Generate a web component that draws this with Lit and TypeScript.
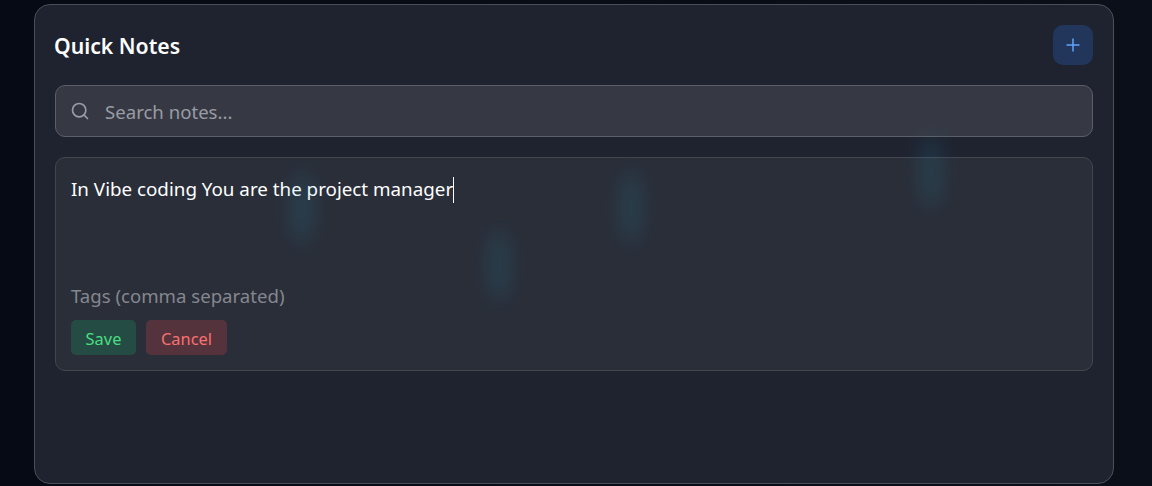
import { LitElement, css, html } from 'lit';
import { customElement, state } from 'lit/decorators.js';

const GLOWS = [
  { x: 302, y: 208, w: 24, h: 72 },
  { x: 499, y: 265, w: 22, h: 72 },
  { x: 631, y: 207, w: 22, h: 74 },
  { x: 931, y: 172, w: 22, h: 74 },
];

@customElement('app-root')
export class AppRoot extends LitElement {
  @state()
  private _note = 'In Vibe coding You are the project manager';

  render() {
    return html`
      <div class="page">
        ${GLOWS.map(
          (g) => html`<div
            class="glow"
            style="left:${g.x - g.w / 2}px;top:${g.y - g.h / 2}px;width:${g.w}px;height:${g.h}px"
          ></div>`
        )}
        <section class="card">
          <header class="head">
            <h2>Quick Notes</h2>
            <button class="add" aria-label="Add note">
              <svg width="16" height="16" viewBox="0 0 16 16" fill="none" stroke="currentColor" stroke-width="1.5">
                <path d="M8 1.5v13M1.5 8h13" />
              </svg>
            </button>
          </header>
          <div class="search">
            <svg width="20" height="20" viewBox="0 0 24 24" fill="none" stroke="currentColor" stroke-width="2" stroke-linecap="round" stroke-linejoin="round">
              <circle cx="11" cy="11" r="8" />
              <path d="m21 21-4.3-4.3" />
            </svg>
            <span>Search notes...</span>
          </div>
          <div class="editor">
            <div class="body"><span>${this._note}</span><i class="caret"></i></div>
            <div class="tags">Tags (comma separated)</div>
            <div class="actions">
              <button class="save">Save</button>
              <button class="cancel">Cancel</button>
            </div>
          </div>
        </section>
      </div>
    `;
  }

  static styles = css`
    :host {
      display: block;
      font-family: 'Noto Sans', sans-serif;
    }

    .page {
      position: relative;
      height: 486px;
      box-sizing: border-box;
      padding: 4px 38px 2px 34px;
      background: linear-gradient(90deg, #060a14 0%, #0a0f1a 100%);
      overflow: hidden;
    }

    .card {
      box-sizing: border-box;
      height: 480px;
      padding: 20px;
      border: 1px solid #4b4e58;
      border-radius: 16px;
      background: #1f2330;
    }

    .glow {
      position: absolute;
      z-index: 1;
      background: #22a6c0;
      opacity: 0.15;
      border-radius: 50%;
      filter: blur(10px);
      pointer-events: none;
    }

    .head {
      display: flex;
      align-items: center;
      justify-content: space-between;
      margin-bottom: 20px;
    }

    h2 {
      margin: 0 0 0 -1px;
      color: #fff;
      font-size: 21.2px;
      font-weight: 600;
    }

    .add {
      display: flex;
      align-items: center;
      justify-content: center;
      width: 40px;
      height: 40px;
      padding: 0;
      border: 0;
      border-radius: 10px;
      background: #22365c;
      color: #60a5fa;
    }

    .search {
      display: flex;
      align-items: center;
      gap: 15px;
      box-sizing: border-box;
      height: 52px;
      padding: 0 14px;
      margin-bottom: 20px;
      border: 1px solid #5c5f69;
      border-radius: 10px;
      background: #363944;
      color: #9a9ca3;
      font-size: 18.6px;
    }

    .editor {
      box-sizing: border-box;
      height: 214px;
      padding: 15px;
      border: 1px solid #43464f;
      border-radius: 10px;
      background: #2a2e39;
    }

    .body {
      height: 111px;
      color: #fff;
      font-size: 18.8px;
      line-height: 32px;
    }

    .caret {
      display: inline-block;
      width: 1px;
      height: 26px;
      vertical-align: -7px;
      background: #fff;
    }

    .tags {
      height: 24px;
      margin-bottom: 12px;
      color: #85878f;
      font-size: 18.6px;
      line-height: 24px;
    }

    .actions {
      display: flex;
      gap: 10px;
    }

    .actions button {
      height: 35px;
      padding: 1px 15px 0;
      border: 0;
      border-radius: 5px;
      font-family: inherit;
      font-size: 16.4px;
    }

    .actions .save {
      width: 65px;
      padding: 1px 0 0;
      background: #254c44;
      color: #4ade80;
    }

    .actions .cancel {
      width: 81px;
      padding: 1px 0 0;
      background: #55333c;
      color: #f87171;
    }
  `;
}

declare global {
  interface HTMLElementTagNameMap {
    'app-root': AppRoot;
  }
}
